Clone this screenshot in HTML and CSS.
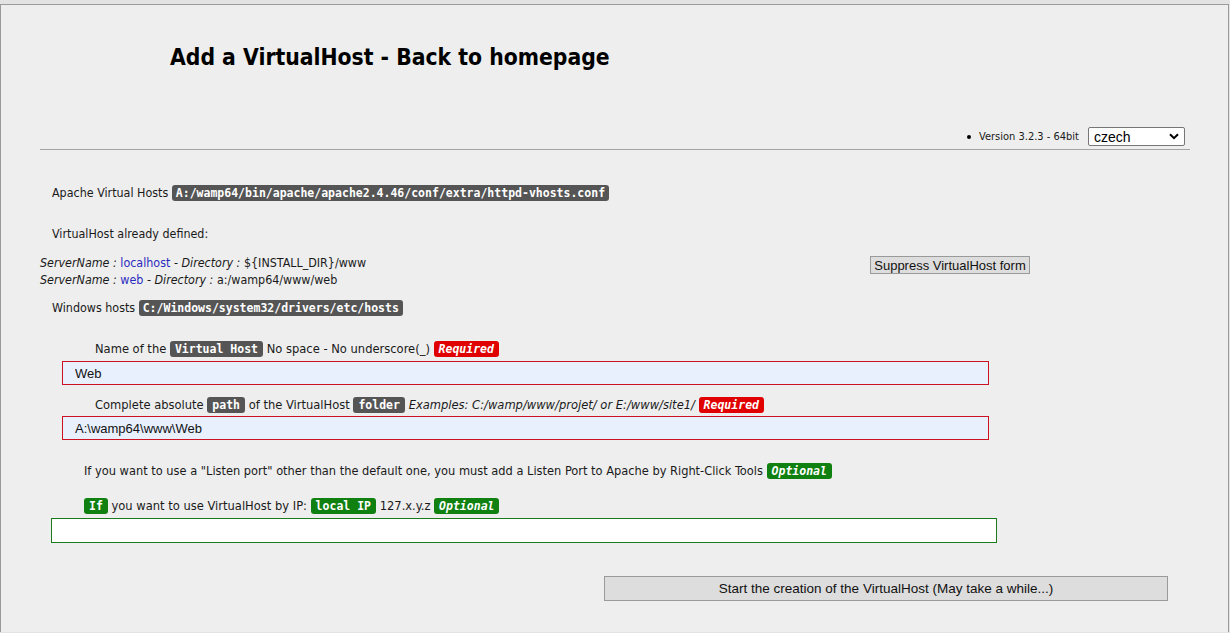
FILE: index.html
```html
<!DOCTYPE html>
<html>
<head>
<meta charset="utf-8">
<title>Add a VirtualHost</title>
<link rel="stylesheet" href="styles.css">
</head>
<body>
<div class="page">
  <div class="head">
    <h1 class="title">Add a VirtualHost - <a class="home" href="#">Back to homepage</a></h1>
    <div class="ver-row">
      <ul class="ver-list"><li>Version 3.2.3 - 64bit</li></ul>
      <span class="sel-wrap">
        <select class="lang"><option>czech</option></select>
        <svg class="chev" width="10" height="7" viewBox="0 0 10 7"><path d="M1 1.2 L5 5.2 L9 1.2" fill="none" stroke="#000" stroke-width="2"/></svg>
      </span>
    </div>
    <div class="rule"></div>
  </div>

  <div class="content">
    <div class="row r-apache">Apache Virtual Hosts <code class="badge dark path">A:/wamp64/bin/apache/apache2.4.46/conf/extra/httpd-vhosts.conf</code></div>
    <div class="row r-defined">VirtualHost already defined:</div>
    <div class="defined">
      <div class="vlist">
        <div class="vline"><i>ServerName :</i> <a class="lnk" href="#">localhost</a> - <i>Directory :</i> ${INSTALL_DIR}/www</div>
        <div class="vline"><i>ServerName :</i> <a class="lnk" href="#">web</a> - <i>Directory :</i> a:/wamp64/www/web</div>
      </div>
      <button class="btn suppress" type="button">Suppress VirtualHost form</button>
    </div>
    <div class="row r-hosts">Windows hosts <code class="badge dark path">C:/Windows/system32/drivers/etc/hosts</code></div>

    <div class="row label r-name">Name of the <code class="badge dark">Virtual Host</code> No space - No underscore(_) <code class="badge red">Required</code></div>
    <input class="field req f1" type="text" value="Web">

    <div class="row label r-path">Complete absolute <code class="badge dark">path</code> of the VirtualHost <code class="badge dark">folder</code> <i>Examples: C:/wamp/www/projet/ or E:/www/site1/</i> <code class="badge red">Required</code></div>
    <input class="field req f2" type="text" value="A:\wamp64\www\Web">

    <div class="row r-port">If you want to use a "Listen port" other than the default one, you must add a Listen Port to Apache by Right-Click Tools <code class="badge green ital">Optional</code></div>
    <div class="row r-ip"><code class="badge green">If</code> you want to use VirtualHost by IP: <code class="badge green">local IP</code> 127.x.y.z <code class="badge green ital">Optional</code></div>
    <input class="field opt" type="text" value="">

    <div class="submit-row">
      <button class="btn submit" type="submit">Start the creation of the VirtualHost (May take a while...)</button>
    </div>
  </div>
</div>
</body>
</html>
```

FILE: styles.css
```css
html, body {
  margin: 0;
  padding: 0;
}
body {
  background: #e3e3e3;
  padding-top: 4px;
  font-family: "DejaVu Sans Condensed", "DejaVu Sans", sans-serif;
  font-size: 12.4px;
  color: #1a1a1a;
}
.page {
  border: 1px solid #9a9a9a;
  border-bottom: none;
  background: #eeeeee;
  height: 628px;
  box-sizing: border-box;
  margin-right: 1px;
}
.head {
  padding: 0 38px 0 39px;
}
.title {
  margin: 0;
  padding: 38px 0 0 130px;
  height: 28px;
  font-family: "DejaVu Sans Condensed", "DejaVu Sans", sans-serif;
  font-weight: bold;
  font-size: 22.7px;
  line-height: 28px;
  color: #000;
}
.home {
  color: #000;
  text-decoration: none;
}
.ver-row {
  margin-top: 56px;
  height: 19px;
  display: flex;
  justify-content: flex-end;
  align-items: center;
  padding-right: 5px;
}
.ver-list {
  margin: 0;
  padding: 0;
  list-style: none;
  font-size: 11px;
}
.ver-list li::before {
  content: "";
  display: inline-block;
  width: 4px;
  height: 4px;
  border-radius: 50%;
  background: #000;
  margin-right: 8px;
  vertical-align: middle;
}
.sel-wrap {
  position: relative;
  margin-left: 9px;
  display: inline-block;
  height: 19px;
}
.lang {
  appearance: none;
  -webkit-appearance: none;
  width: 97px;
  height: 19px;
  box-sizing: border-box;
  border: 1px solid #767676;
  border-radius: 2px;
  background: #fff;
  font-family: "Liberation Sans", Arial, sans-serif;
  font-size: 14px;
  padding: 0 0 0 5px;
  color: #000;
  margin: 0;
  display: block;
}
.chev {
  position: absolute;
  right: 6px;
  top: 6px;
  pointer-events: none;
}
.rule {
  margin-top: 3px;
  height: 1px;
  background: #a4a4a4;
}
.content {
  padding: 0 0 0 39px;
}
.row {
  height: 18px;
  line-height: 18px;
  white-space: nowrap;
}
.r-apache { margin-top: 34px; padding-left: 12px; }
.r-defined { margin-top: 23px; padding-left: 12px; }
.defined {
  margin-top: 11px;
  display: flex;
  align-items: flex-start;
  height: 34px;
}
.vlist {
  width: 830px;
}
.vline {
  height: 17px;
  line-height: 17px;
  white-space: nowrap;
}
.lnk {
  color: #2b2bbf;
  text-decoration: none;
}
.r-hosts { margin-top: 11px; padding-left: 12px; }
.label { font-size: 12.8px; padding-left: 55px; }
.r-name { margin-top: 23px; }
.r-path { margin-top: 11px; }
.r-port { margin-top: 22px; padding-left: 44px; font-size: 12.7px; }
.r-ip { margin-top: 17px; padding-left: 44px; font-size: 12.8px; }

.badge {
  display: inline-block;
  vertical-align: top;
  margin-top: 1px;
  height: 16px;
  line-height: 16px;
  padding: 0 5px;
  border-radius: 3px;
  font-family: "DejaVu Sans Mono", "Liberation Mono", monospace;
  font-weight: bold;
  font-size: 11.5px;
  color: #fff;
  white-space: pre;
  box-sizing: border-box;
}
.badge.path { font-size: 11.5px; padding: 0 4px; }
.dark { background: #555555; }
.red { background: #e00000; font-style: italic; }
.green { background: #108010; }
.ital { font-style: italic; }

.field {
  display: block;
  box-sizing: border-box;
  height: 24px;
  margin: 3px 0 0 22px;
  width: 927px;
  background: #e8f0fe;
  border: 1px solid #cc1122;
  font-family: "Liberation Sans", Arial, sans-serif;
  font-size: 13px;
  color: #111;
  padding: 0 0 0 12px;
  outline: none;
}
.field.f2 { margin-top: 2px; }
.field.opt {
  margin: 3px 0 0 11px;
  width: 946px;
  height: 25px;
  background: #fff;
  border-color: #1c7a1c;
}
.btn {
  font-family: "Liberation Sans", Arial, sans-serif;
  font-size: 13px;
  color: #111;
  background: #dddddd;
  border: 1px solid #9a9a9a;
  border-radius: 0;
  box-sizing: border-box;
  margin: 0;
  padding: 0;
  cursor: pointer;
}
.suppress {
  margin-top: 2px;
  width: 160px;
  height: 18px;
}
.submit-row {
  margin-top: 33px;
  padding-left: 564px;
}
.submit {
  width: 564px;
  height: 25px;
  font-size: 13.5px;
}
```
